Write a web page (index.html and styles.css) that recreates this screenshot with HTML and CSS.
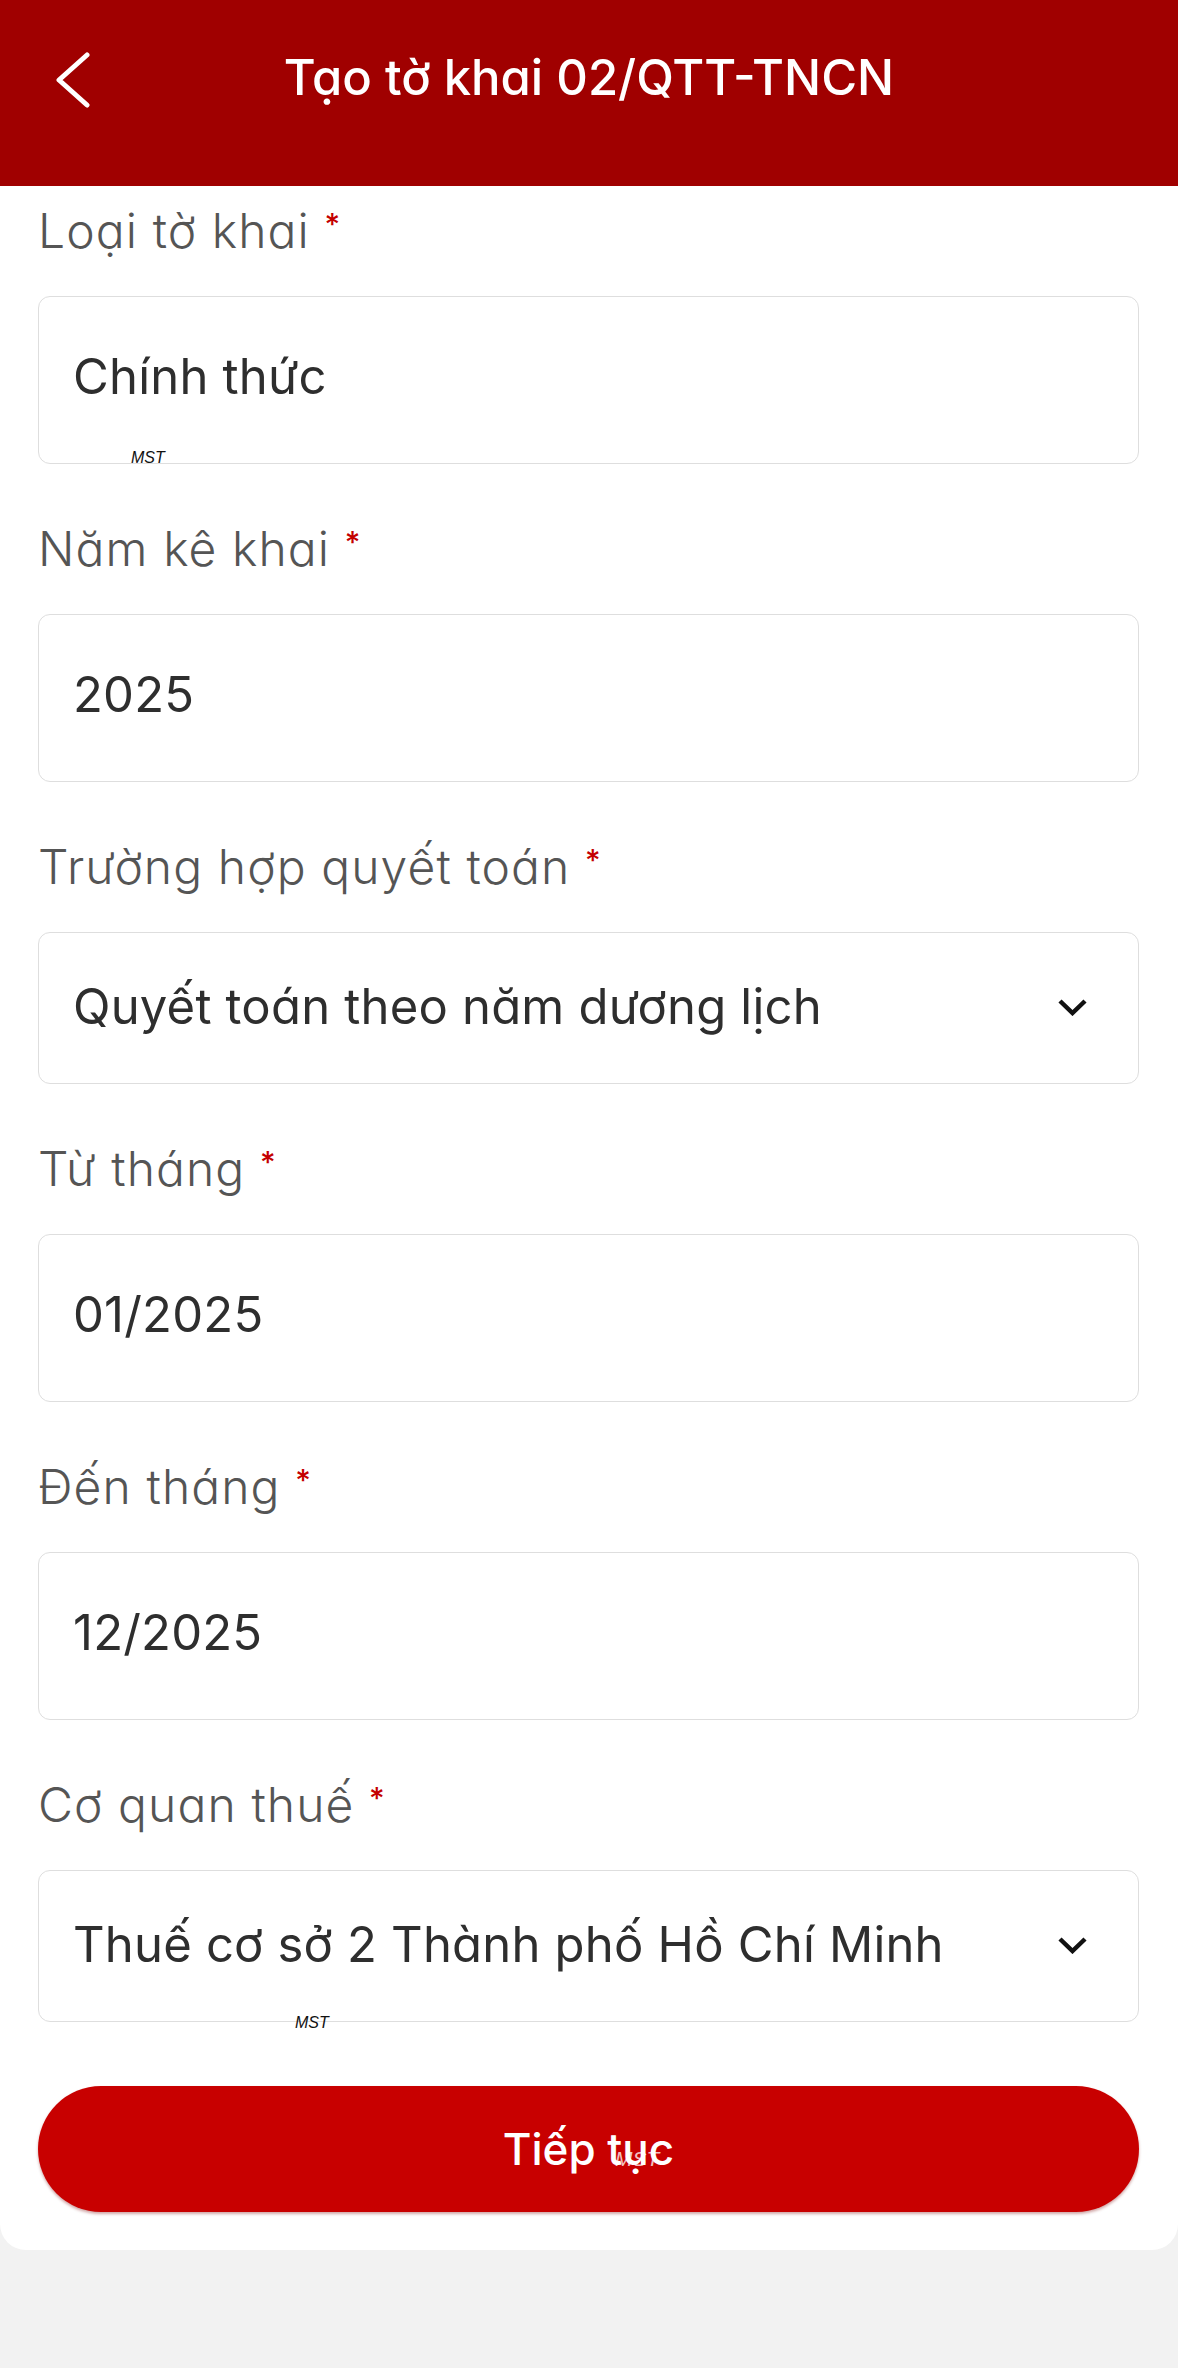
FILE: index.html
```html
<!DOCTYPE html>
<html lang="vi">
<head>
<meta charset="utf-8">
<title>Tạo tờ khai 02/QTT-TNCN</title>
<link rel="stylesheet" href="styles.css">
</head>
<body>
<div class="screen">
  <header class="topbar">
    <button class="back" aria-label="Quay lại">
      <svg width="36" height="56" viewBox="0 0 36 56"><polyline points="32,3 4,28 32,53" fill="none" stroke="#fff" stroke-width="5" stroke-linecap="round" stroke-linejoin="round"/></svg>
    </button>
    <h1 class="title">Tạo tờ khai 02/QTT-TNCN</h1>
    <span></span>
  </header>
  <main class="card">
    <form class="form">
      <div class="field">
        <label class="label">Loại tờ khai <span class="req">*</span></label>
        <div class="input">Chính thức<span class="wm wm-dark wm-1">MST</span></div>
      </div>
      <div class="field">
        <label class="label">Năm kê khai <span class="req">*</span></label>
        <div class="input">2025</div>
      </div>
      <div class="field">
        <label class="label">Trường hợp quyết toán <span class="req">*</span></label>
        <div class="input select">Quyết toán theo năm dương lịch
          <svg class="chev" width="31" height="18" viewBox="0 0 31 18"><polyline points="3,3 15.5,15 28,3" fill="none" stroke="#111" stroke-width="4.5" stroke-linejoin="miter"/></svg>
        </div>
      </div>
      <div class="field">
        <label class="label">Từ tháng <span class="req">*</span></label>
        <div class="input">01/2025</div>
      </div>
      <div class="field">
        <label class="label">Đến tháng <span class="req">*</span></label>
        <div class="input">12/2025</div>
      </div>
      <div class="field">
        <label class="label">Cơ quan thuế <span class="req">*</span></label>
        <div class="input select">Thuế cơ sở 2 Thành phố Hồ Chí Minh
          <svg class="chev" width="31" height="18" viewBox="0 0 31 18"><polyline points="3,3 15.5,15 28,3" fill="none" stroke="#111" stroke-width="4.5" stroke-linejoin="miter"/></svg>
          <span class="wm wm-dark wm-2">MST</span>
        </div>
      </div>
      <button type="button" class="primary">Tiếp tục<span class="wm wm-light">MST</span></button>
    </form>
  </main>
</div>
</body>
</html>
```

FILE: styles.css
```css
* { box-sizing: border-box; }
html, body { margin: 0; padding: 0; }
body {
  background: #f2f2f2;
  font-family: "Inter", "Noto Sans", sans-serif;
  font-feature-settings: "cv11" 1;
  width: 1178px;
  min-height: 2368px;
}
.screen { width: 1178px; }

.topbar {
  background: #a00000;
  height: 186px;
  display: grid;
  grid-template-columns: 1fr auto 1fr;
  align-items: start;
  padding-top: 48px;
}
.back {
  background: none;
  border: 0;
  padding: 0;
  margin: 4px 0 0 55px;
  width: 36px;
  height: 56px;
  justify-self: start;
  display: flex;
}
.title {
  margin: 0;
  color: #fff;
  font-size: 49px;
  font-weight: 500;
  line-height: 60px;
  letter-spacing: 0;
}

.card {
  background: #fff;
  border-radius: 0 0 26px 26px;
  padding: 15px 39px 38px 38px;
}
.form {
  display: flex;
  flex-direction: column;
  gap: 55px;
}
.field { display: flex; flex-direction: column; }
.label {
  display: block;
  height: 60px;
  font-size: 48px;
  line-height: 60px;
  font-weight: 300;
  letter-spacing: 1.1px;
  color: #555;
  margin-bottom: 35px;
  white-space: nowrap;
}
.req {
  position: relative;
  top: -13px;
  line-height: 0;
  color: #c40000;
  font-size: 30px;
  font-weight: 500;
}
.input {
  position: relative;
  height: 168px;
  border: 1.5px solid #dedede;
  border-radius: 12px;
  padding: 0 50px 8px 34px;
  display: flex;
  align-items: center;
  font-size: 49px;
  letter-spacing: 0.2px;
  color: #2e2e2e;
  font-weight: 400;
}
.input.select {
  height: 152px;
  padding-bottom: 4px;
  justify-content: space-between;
}
.chev { flex: none; margin-top: 2px; }

.primary {
  position: relative;
  margin-top: 9px;
  height: 126px;
  border: 0;
  border-radius: 63px;
  background: #c80000;
  color: #fff;
  font-family: inherit;
  font-feature-settings: "cv11" 1;
  font-size: 44px;
  font-weight: 500;
  box-shadow: 0 2px 3px rgba(120,0,0,0.35);
}

.wm {
  position: absolute;
  font-family: "Liberation Sans", Arial, sans-serif;
  font-style: italic;
  font-size: 16px;
  font-weight: 400;
  letter-spacing: 0;
  line-height: 1;
}
.wm-dark { color: #111; }
.wm-1 { left: 92px; bottom: -3px; }
.wm-2 { left: 256px; bottom: -10px; }
.wm-light { color: rgba(255,255,255,0.75); left: 577px; top: 62px; font-size: 21px; }
```
